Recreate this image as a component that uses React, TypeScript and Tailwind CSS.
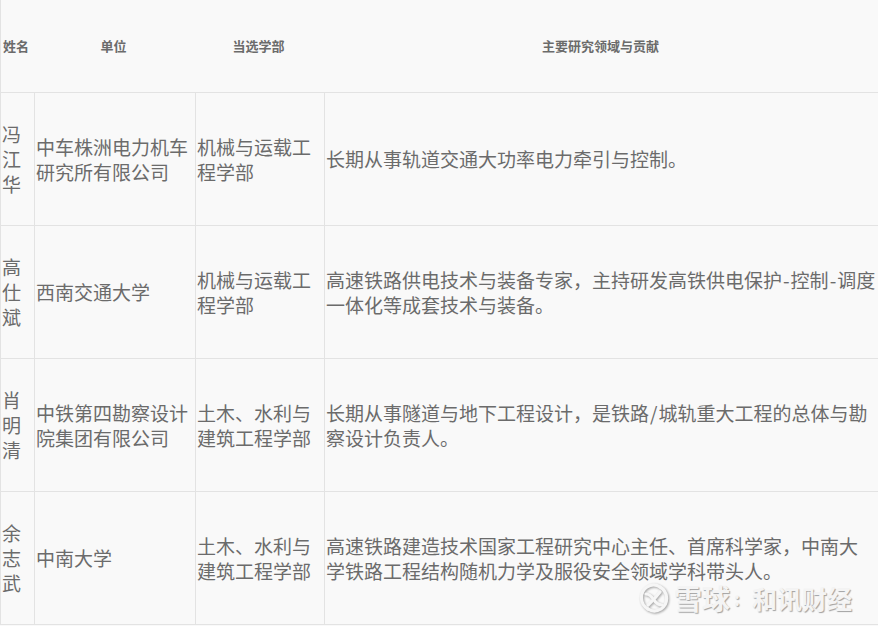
import React from 'react';

const Dash = () => <span className="px-[1px]">-</span>;

const rows = [
  {
    name: '冯江华',
    org: '中车株洲电力机车研究所有限公司',
    dept: '机械与运载工程学部',
    desc: '长期从事轨道交通大功率电力牵引与控制。',
  },
  {
    name: '高仕斌',
    org: '西南交通大学',
    dept: '机械与运载工程学部',
    desc: (
      <span>
        高速铁路供电技术与装备专家，主持研发高铁供电保护<Dash />控制<Dash />调度一体化等成套技术与装备。
      </span>
    ),
  },
  {
    name: '肖明清',
    org: '中铁第四勘察设计院集团有限公司',
    dept: '土木、水利与建筑工程学部',
    desc: (
      <span>
        长期从事隧道与地下工程设计，是铁路<span className="px-[1px]">/</span>城轨重大工程的总体与勘察设计负责人。
      </span>
    ),
  },
  {
    name: '余志武',
    org: '中南大学',
    dept: '土木、水利与建筑工程学部',
    desc: '高速铁路建造技术国家工程研究中心主任、首席科学家，中南大学铁路工程结构随机力学及服役安全领域学科带头人。',
  },
];

const cols = 'grid grid-cols-[33px_161px_129px_555px]';
const font = { fontFamily: '"Noto Sans CJK SC", sans-serif' };

export default function App() {
  return (
    <div className="relative w-[878px] h-[626px] overflow-hidden bg-[#f9f9f9] text-[#6b6b6b]" style={font}>
      <div className={`${cols} h-[93px] border-b border-l border-[#e3e3e3] items-center text-center text-[13px] font-bold leading-[19px] pb-[2px]`}>
        <div className="text-left pl-[2px]">姓名</div>
        <div className="pr-[2px]">单位</div>
        <div className="pr-[2px]">当选学部</div>
        <div className="pr-[2px]">主要研究领域与贡献</div>
      </div>
      {rows.map((r) => (
        <div key={r.name} className={`${cols} h-[133px] border-b border-l border-[#e3e3e3] items-stretch text-[19px] leading-[25px]`}>
          <div className="flex items-center pl-[1px] pr-[1px] pb-[1px]">{r.name}</div>
          <div className="flex items-center border-l border-[#e3e3e3] pl-[1px] pr-[2px] pb-[1px]">{r.org}</div>
          <div className="flex items-center border-l border-[#e3e3e3] pl-[1px] pr-[2px] pb-[1px]">{r.dept}</div>
          <div className="flex items-center border-l border-[#e3e3e3] pl-[1px] pr-[3px] pb-[1px]">{r.desc}</div>
        </div>
      ))}
      {/* watermark */}
      <div className="absolute left-[638px] top-[582px] flex items-center text-[#f4f4f4] [text-shadow:1px_1px_1px_#a0a0a0]">
        <svg width="32" height="32" viewBox="0 0 32 32" fill="none" stroke="#f6f6f6" strokeWidth="3.2" strokeLinecap="round" style={{ filter: 'drop-shadow(1px 1px 1px #a0a0a0)' }}>
          <path d="M10 27a13 13 0 0 1-1-22c5-3 10-2 13 0" />
          <path d="M22 5a13 13 0 0 1 1 22c-5 3-10 2-13 0" />
          <path d="M8 12c4 0 6 3 8 6s4 5 8 5" />
          <path d="M22 10l-5 6M14 19l-4 4" />
        </svg>
        <span className="ml-[4px] text-[28px] leading-[32px] font-bold">雪球</span>
        <span className="ml-[4px] text-[18px] leading-[32px] font-bold">:</span>
        <span className="ml-[12px] text-[25px] leading-[32px] font-bold">和讯财经</span>
      </div>
    </div>
  );
}
